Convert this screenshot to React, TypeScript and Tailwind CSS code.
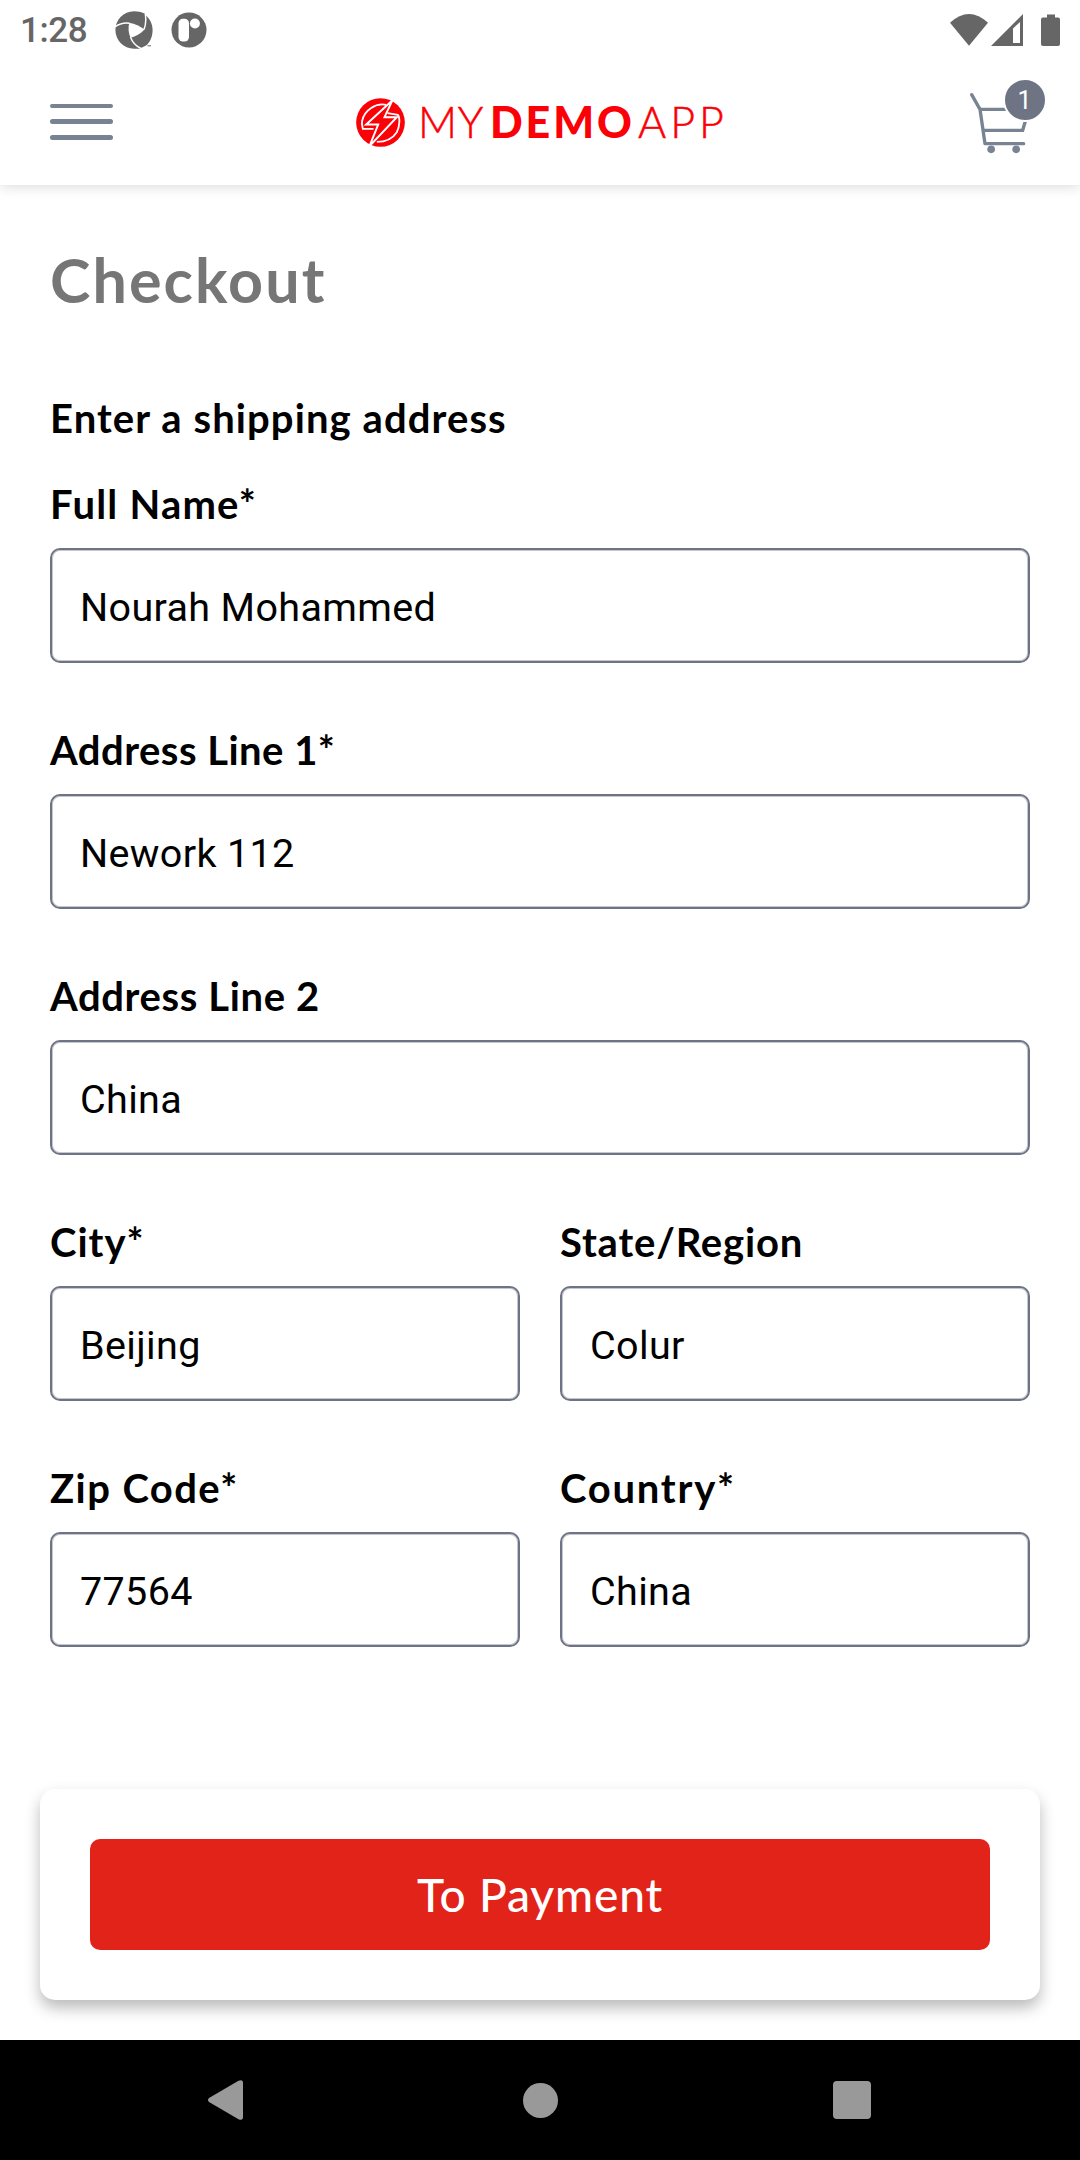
function StatusBar() {
  return (
    <div className="flex h-[60px] items-center justify-between pl-[20px] pr-[20px] text-[#666666]">
      <div className="flex items-center">
        <span className="w-[95px] pt-[2px] font-['Roboto',sans-serif] text-[35px] leading-[60px] font-medium tracking-[-0.4px]">
          1:28
        </span>
        <svg className="h-[38px] w-[38px]" viewBox="0 0 38 38">
          <path
            d="M19 0.3C8.7 0.3 0.4 8.600 0.400 19S8.700 37.700 19 37.700H24.500L31 34.600C35.400 31.100 37.600 25 37.600 19S34.500 7.500 31 4.600L29.500 2.500C26.400 1 22.700 0.300 19 0.300Z"
            fill="currentColor"
          />
          <path d="M14.300 11.700C20 12.700 25 15 29.500 18.500C25.500 22.800 20.700 25.600 15.500 26.700C13.300 21.800 13 16.500 14.300 11.700Z" fill="white" />
          <path
            d="M0 15.800C4.500 12.600 9.500 11.300 14.500 12.200M30.300 3C31.200 8.500 31 13.500 29 18.500M15.500 26.300C17.500 31.500 21 35.300 26.500 37.700"
            fill="none"
            stroke="white"
            strokeWidth="1.500"
          />
          <path d="M32.500 34.800H36" stroke="currentColor" strokeWidth="1" />
        </svg>
        <svg className="ml-[18px] h-[36px] w-[36px]" viewBox="0 0 36 36">
          <circle cx="18" cy="18" r="17.500" fill="currentColor" />
          <rect x="7.500" y="6.700" width="10.500" height="22.800" rx="4.500" fill="white" />
          <circle cx="23.900" cy="11.500" r="5" fill="white" />
        </svg>
      </div>
      <svg className="h-[34px] w-[110px]" viewBox="950 12 110 34">
        <path d="M950 21.800Q969 4.300 988 21.800L969 44.800Z" fill="currentColor" />
        <path fillRule="evenodd" d="M991 45L1023 13V45ZM1013 27.500V42H1020V21Z" fill="currentColor" />
        <path
          d="M1047 13.500H1055V16.500H1058Q1060 16.500 1060 18.500V43Q1060 45 1058 45H1043Q1041 45 1041 43V18.500Q1041 16.500 1043 16.500H1047Z"
          fill="currentColor"
        />
      </svg>
    </div>
  );
}

function Logo() {
  return (
    <div className="flex items-center text-[#fb0006]">
      <svg className="h-[49px] w-[49px]" viewBox="17.500 15.500 147 147">
        <circle cx="91" cy="89" r="73" fill="currentColor" />
        <path
          d="M108 36C78 29 42 52 36 84C34 92 36 102 38 108H70M112 61L143 66C150 74 149 100 140 118C127 138 106 147 80 147"
          fill="none"
          stroke="white"
          strokeWidth="5.500"
        />
        <path
          d="M127 22L48 95H84L58 160L140 73H103Z"
          fill="currentColor"
          stroke="white"
          strokeWidth="6"
        />
      </svg>
      <div className="flex font-['Lato',sans-serif] text-[43px] leading-[52px] font-light">
        <span className="ml-[13px] w-[72px] tracking-[0.6px] [-webkit-text-stroke:0.5px_#fb0006]">MY</span>
        <span className="w-[148px] font-black tracking-[2.900px]">DEMO</span>
        <span className="w-[90px] tracking-[4px] [-webkit-text-stroke:0.5px_#fb0006]">APP</span>
      </div>
    </div>
  );
}

function CartButton() {
  return (
    <div className="relative h-[74px] w-[78px]">
      <svg className="h-[74px] w-[78px]" viewBox="150 240 234 222" fill="none" stroke="#788494">
        <path d="M155 284L180 328L195 431H311" strokeWidth="10" strokeLinecap="round" strokeLinejoin="round" />
        <path d="M180 328H262M191 391H308L316 364" strokeWidth="10" />
        <circle cx="213.500" cy="448" r="11.500" fill="#788494" stroke="none" />
        <circle cx="288.500" cy="448" r="11.500" fill="#788494" stroke="none" />
      </svg>
      <div className="absolute top-[-2px] left-[33px] flex h-[44px] w-[44px] items-center justify-center rounded-full border-2 border-white bg-[#6e7484] pr-px font-['Roboto',sans-serif] text-[25px] leading-none text-white">
        1
      </div>
    </div>
  );
}

function Header() {
  return (
    <header className="h-[185px] bg-white shadow-[0_2px_12px_rgba(0,0,0,0.14)]">
      <StatusBar />
      <div className="flex h-[125px] items-start justify-between pr-[32px] pl-[50px]">
        <div className="mt-[43.500px] flex w-[306px] flex-col gap-[11.300px]">
          <div className="h-[4.500px] w-[63px] rounded-full bg-[#788292]" />
          <div className="h-[4.500px] w-[63px] rounded-full bg-[#788292]" />
          <div className="h-[4.500px] w-[63px] rounded-full bg-[#788292]" />
        </div>
        <div className="mt-[36px] mr-auto">
          <Logo />
        </div>
        <div className="mt-[20px]">
          <CartButton />
        </div>
      </div>
    </header>
  );
}

function Field({ label, value, tracking }: { label: string; value: string; tracking: string }) {
  return (
    <div className="flex flex-1 flex-col gap-[20px]">
      <label className={`h-[48px] text-[40px] leading-[48px] font-bold ${tracking}`}>{label}</label>
      <div className="flex h-[115px] items-center rounded-[10px] border-2 border-[#6e7485] pt-[4px] pl-[28px] font-['Roboto',sans-serif] text-[39.500px] leading-[46px] tracking-[0.350px] shadow-[inset_0_0_0_1px_rgba(110,116,133,0.4)]">
        {value}
      </div>
    </div>
  );
}

function NavigationBar() {
  return (
    <nav className="flex h-[120px] items-center bg-black pl-[207px] text-[#999999]">
      <svg className="h-[40px] w-[36px]" viewBox="0 0 36 40">
        <path d="M2 18L31.500 0.800Q36 -1 36 3V37Q36 41 31.500 39.200L2 22Q0 20 2 18Z" fill="currentColor" />
      </svg>
      <div className="ml-[279.500px] h-[35px] w-[35px] rounded-full bg-[#999999]" />
      <div className="ml-[275.500px] h-[38px] w-[38px] rounded-[4px] bg-[#999999]" />
    </nav>
  );
}

export default function App() {
  return (
    <div className="flex h-[2160px] w-[1080px] flex-col overflow-hidden bg-white font-['Lato',sans-serif] text-black">
      <Header />
      <main className="flex flex-1 flex-col px-[50px] pt-[59px]">
        <h1 className="h-[72px] text-[61px] leading-[72px] font-bold tracking-[2.070px] text-[#767676]">Checkout</h1>
        <h2 className="mt-[78px] h-[48px] text-[40px] leading-[48px] font-bold tracking-[1.090px]">
          Enter a shipping address
        </h2>
        <div className="mt-[38px] flex flex-col gap-[63px]">
          <Field label="Full Name*" value="Nourah Mohammed" tracking="tracking-[1.200px]" />
          <Field label="Address Line 1*" value="Nework 112" tracking="tracking-[0.480px]" />
          <Field label="Address Line 2" value="China" tracking="tracking-[0.620px]" />
          <div className="flex gap-[40px]">
            <Field label="City*" value="Beijing" tracking="tracking-[1px]" />
            <Field label="State/Region" value="Colur" tracking="tracking-[0.830px]" />
          </div>
          <div className="flex gap-[40px]">
            <Field label="Zip Code*" value="77564" tracking="tracking-[1.400px]" />
            <Field label="Country*" value="China" tracking="tracking-[1.750px]" />
          </div>
        </div>
        <div className="-mx-[10px] mt-auto mb-[40px] rounded-[15px] bg-white px-[50px] py-[50px] shadow-[0_8px_15px_rgba(0,0,0,0.27)]">
          <button className="block h-[111px] w-full rounded-[10px] bg-[#e2231a] text-center text-[46px] leading-[108px] font-medium tracking-[0.900px] text-white">
            To Payment
          </button>
        </div>
      </main>
      <NavigationBar />
    </div>
  );
}
